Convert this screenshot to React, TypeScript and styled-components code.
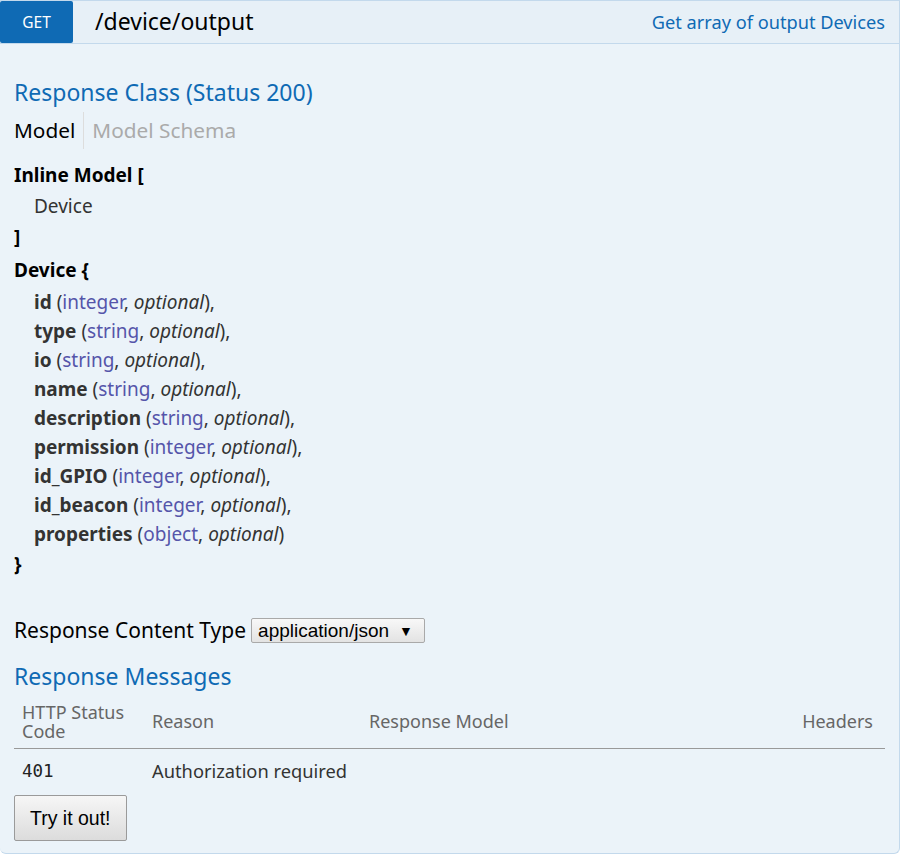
import styled, { createGlobalStyle } from 'styled-components';

const GlobalStyle = createGlobalStyle`
  body {
    margin: 0;
    background: #ffffff;
    font-family: 'Noto Sans', 'DejaVu Sans', sans-serif;
  }
`;

type Prop = {
  name: string;
  type: string;
};

const properties: Prop[] = [
  { name: 'id', type: 'integer' },
  { name: 'type', type: 'string' },
  { name: 'io', type: 'string' },
  { name: 'name', type: 'string' },
  { name: 'description', type: 'string' },
  { name: 'permission', type: 'integer' },
  { name: 'id_GPIO', type: 'integer' },
  { name: 'id_beacon', type: 'integer' },
  { name: 'properties', type: 'object' },
];

const App = () => {
  return (
    <>
      <GlobalStyle />
      <Operation>
        <Heading>
          <Method>GET</Method>
          <Path>/device/output</Path>
          <Summary href="#">Get array of output Devices</Summary>
        </Heading>
        <Content>
          <SectionTitle>Response Class (Status 200)</SectionTitle>
          <SignatureNav>
            <NavItem active>Model</NavItem>
            <NavItem>Model Schema</NavItem>
          </SignatureNav>
          <ModelBlock>
            <Group lineHeight={31}>
              <Line strong>Inline Model [</Line>
              <Line indent>Device</Line>
              <Line strong>]</Line>
            </Group>
            <Group gap={2} lineHeight={30}>
              <Line strong>Device {'{'}</Line>
              <PropList>
                {properties.map((p, i) => (
                  <PropLine key={p.name}>
                    <PropName>{p.name}</PropName> (<PropType>{p.type}</PropType>,{' '}
                    <PropOpt>optional</PropOpt>){i < properties.length - 1 ? ',' : ''}
                  </PropLine>
                ))}
              </PropList>
              <Line strong>{'}'}</Line>
            </Group>
          </ModelBlock>
          <ContentTypeRow>
            <ContentTypeLabel>Response Content Type</ContentTypeLabel>
            <SelectBox>
              <span>application/json</span>
              <Arrow>▼</Arrow>
            </SelectBox>
          </ContentTypeRow>
          <SectionTitle top={20}>Response Messages</SectionTitle>
          <Table>
            <thead>
              <tr>
                <Th width={130}>HTTP Status Code</Th>
                <Th width={217}>Reason</Th>
                <Th>Response Model</Th>
                <Th align="right">Headers</Th>
              </tr>
            </thead>
            <tbody>
              <tr>
                <Td>
                  <Code>401</Code>
                </Td>
                <Td>Authorization required</Td>
                <Td />
                <Td />
              </tr>
            </tbody>
          </Table>
          <TryButton>Try it out!</TryButton>
        </Content>
      </Operation>
    </>
  );
};

const Operation = styled.div`
  width: 900px;
`;

const Heading = styled.div`
  display: flex;
  align-items: center;
  height: 42px;
  padding-right: 14px;
  background: #e7f0f7;
  border: 1px solid #c3d9ec;
  border-left: none;
`;

const Method = styled.span`
  display: flex;
  align-items: center;
  justify-content: center;
  width: 73px;
  height: 42px;
  border-radius: 2px;
  background: #0f6ab4;
  color: #ffffff;
  font-size: 15.5px;
`;

const Path = styled.span`
  margin-left: 22px;
  font-size: 23px;
  line-height: 30px;
  margin-top: -2px;
  color: #000000;
`;

const Summary = styled.a`
  margin-left: auto;
  font-size: 18.2px;
  color: #0f6ab4;
  text-decoration: none;
`;

const Content = styled.div`
  padding: 35px 14px 12px 14px;
  background: #ebf3f9;
  border: 1px solid #c3d9ec;
  border-top: none;
  border-left: none;
  border-radius: 0 0 6px 6px;
`;

const SectionTitle = styled.h4<{ top?: number }>`
  margin: ${({ top }) => top ?? 0}px 0 0 0;
  font-size: 23px;
  line-height: 26px;
  font-weight: normal;
  color: #0f6ab4;
`;

const SignatureNav = styled.div`
  display: flex;
  margin-top: 7px;
  height: 37px;
`;

const NavItem = styled.span<{ active?: boolean }>`
  font-size: 20.8px;
  line-height: 37px;
  padding-right: 8px;
  color: ${({ active }) => (active ? '#000000' : '#aaaaaa')};
  & + & {
    padding-left: 8px;
    border-left: 1px solid #dddddd;
  }
`;

const ModelBlock = styled.div`
  margin-top: 11px;
  font-size: 19px;
  color: #333333;
`;

const Group = styled.div<{ gap?: number; lineHeight: number }>`
  margin-top: ${({ gap }) => gap ?? 0}px;
  line-height: ${({ lineHeight }) => lineHeight}px;
`;

const Line = styled.div<{ strong?: boolean; indent?: boolean }>`
  padding-left: ${({ indent }) => (indent ? 20 : 0)}px;
  font-weight: ${({ strong }) => (strong ? 'bold' : 'normal')};
  color: ${({ strong }) => (strong ? '#000000' : '#333333')};
`;

const PropList = styled.div`
  padding-top: 3px;
`;

const PropLine = styled.div`
  line-height: 29px;
  padding-left: 20px;
`;

const PropName = styled.span`
  font-weight: bold;
`;

const PropType = styled.span`
  color: #5555aa;
`;

const PropOpt = styled.span`
  font-style: italic;
`;

const ContentTypeRow = styled.div`
  display: flex;
  align-items: center;
  gap: 5px;
  margin-top: 39px;
  height: 25px;
`;

const ContentTypeLabel = styled.span`
  font-size: 21px;
  line-height: 25px;
  color: #000000;
`;

const SelectBox = styled.div`
  display: flex;
  align-items: center;
  gap: 10px;
  box-sizing: border-box;
  height: 25px;
  padding: 0 11px 0 6px;
  border: 1px solid #a9a9a9;
  border-radius: 2px;
  background: linear-gradient(#f8f8f8, #e3e3e3);
  font-family: 'Liberation Sans', Arial, sans-serif;
  font-size: 19px;
  color: #000000;
`;

const Arrow = styled.span`
  font-size: 14px;
`;

const Table = styled.table`
  width: 100%;
  margin-top: 6px;
  border-collapse: collapse;
`;

const Th = styled.th<{ width?: number; align?: 'left' | 'right' }>`
  width: ${({ width }) => (width ? `${width}px` : 'auto')};
  box-sizing: border-box;
  padding: 8px 12px 8px 8px;
  border-bottom: 1px solid #999999;
  text-align: ${({ align }) => align ?? 'left'};
  font-size: 18px;
  line-height: 18.5px;
  font-weight: normal;
  color: #666666;
`;

const Td = styled.td`
  padding: 9px 8px 6px 8px;
  font-size: 18.3px;
  line-height: 24px;
  color: #333333;
`;

const Code = styled.span`
  font-family: 'DejaVu Sans Mono', 'Liberation Mono', monospace;
  font-size: 17.5px;
  color: #222222;
`;

const TryButton = styled.button`
  display: block;
  margin-top: 6px;
  height: 46px;
  padding: 0 15px;
  border: 1px solid #9a9a9a;
  border-radius: 2px;
  background: linear-gradient(#f6f6f6, #dcdcdc);
  font-family: 'Liberation Sans', Arial, sans-serif;
  font-size: 19.5px;
  color: #000000;
`;

export default App;
